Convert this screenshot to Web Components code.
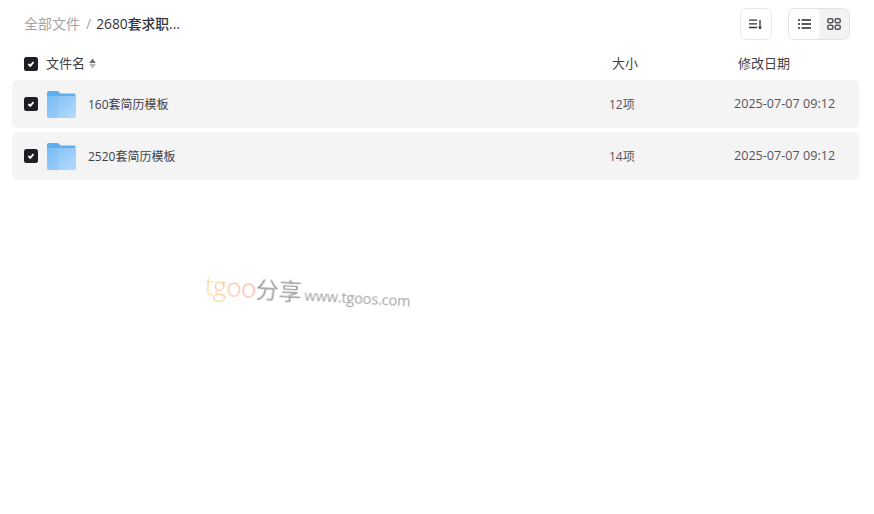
<!DOCTYPE html>
<html lang="zh">
<head>
<meta charset="utf-8">
<title>2680套求职...</title>
<style>
	html, body { margin: 0; background: #fff; }
	body {
		position: relative;
		height: 514px;
		overflow: hidden;
		font-family: "Open Sans", "Noto Sans CJK SC", sans-serif;
		color: #33333d;
	}
</style>
</head>
<body>
<file-list>
	<file-toolbar slot="top"></file-toolbar>
	<file-head slot="top"></file-head>
	<file-row name="160套简历模板" size="12项" date="2025-07-07 09:12"></file-row>
	<file-row name="2520套简历模板" size="14项" date="2025-07-07 09:12"></file-row>
</file-list>
<water-mark></water-mark>

<script>
const CHECK_STYLE = `
	.check {
		width: 14px;
		height: 14px;
		border-radius: 2.5px;
		background: #1d1d23;
		display: grid;
		place-items: center;
		flex: none;
	}
	.check svg { display: block; }
`;
const CHECK_HTML = `<span class="check"><svg width="10" height="10" viewBox="0 0 10 10"><path d="M2.4 5 4.3 6.9 7.5 3.2" fill="none" stroke="#fff" stroke-width="1.8"/></svg></span>`;

class FileList extends HTMLElement {
	constructor() {
		super();
		this.attachShadow({ mode: "open" });
		this.shadowRoot.innerHTML = `
			<style>
				:host { display: block; }
				.rows {
					display: grid;
					gap: 4px;
					padding: 0 15px 0 12px;
				}
			</style>
			<slot name="top"></slot>
			<div class="rows"><slot></slot></div>
		`;
	}
}
customElements.define("file-list", FileList);

class FileToolbar extends HTMLElement {
	constructor() {
		super();
		this.attachShadow({ mode: "open" });
		this.shadowRoot.innerHTML = `
			<style>
				:host {
					display: flex;
					align-items: center;
					height: 32px;
					padding: 8px 24px 0 24px;
				}
				.crumbs {
					display: flex;
					align-items: center;
					flex: 1;
					font-size: 14px;
					line-height: 32px;
				}
				.root { color: #a3a3a8; }
				.sep { color: #a3a3a8; margin: 0 5px 0 6px; font-size: 14px; }
				.current { color: #33333d; font-weight: 500; font-size: 13.8px; }
				.btn {
					box-sizing: border-box;
					width: 32px;
					height: 32px;
					border: 1px solid #e8e8ea;
					border-radius: 7px;
					display: grid;
					place-items: center;
					margin-right: 16px;
				}
				.toggle {
					box-sizing: border-box;
					width: 62px;
					height: 32px;
					border: 1px solid #e4e4e6;
					border-radius: 7px;
					background: #f3f3f4;
					display: flex;
					overflow: hidden;
				}
				.toggle span {
					flex: 1;
					display: grid;
					place-items: center;
				}
				.toggle .on {
					background: #fff;
					border-radius: 6px 0 0 6px;
				}
				svg { display: block; }
			</style>
			<div class="crumbs">
				<span class="root">全部文件</span><span class="sep">/</span><span class="current">2680套求职...</span>
			</div>
			<div class="btn">
				<svg width="14" height="12" viewBox="0 0 14 12" fill="none" stroke="#33333a" stroke-width="1.3">
					<path d="M0 2.1H8M0 5.8H8M0 9.5H8"/>
					<path d="M11 2V10.5"/>
					<path d="M9.6 8.6 11 10.5 12.4 8.6" stroke-width="1.1"/>
				</svg>
			</div>
			<div class="toggle">
				<span class="on">
					<svg width="13" height="10" viewBox="0 0 13 10" fill="none" stroke="#26262c" stroke-width="1.3">
						<path d="M0 1H2M0 5H2M0 9H2" />
						<path d="M3.5 1H13M3.5 5H13M3.5 9H13"/>
					</svg>
				</span>
				<span>
					<svg width="14" height="12" viewBox="0 0 14 12" fill="none" stroke="#55555c" stroke-width="1.5">
						<rect x="0.8" y="0.8" width="5" height="4" rx="1.3"/>
						<rect x="8.2" y="0.8" width="5" height="4" rx="1.3"/>
						<rect x="0.8" y="7.2" width="5" height="4" rx="1.3"/>
						<rect x="8.2" y="7.2" width="5" height="4" rx="1.3"/>
					</svg>
				</span>
			</div>
		`;
	}
}
customElements.define("file-toolbar", FileToolbar);

class FileHead extends HTMLElement {
	constructor() {
		super();
		this.attachShadow({ mode: "open" });
		this.shadowRoot.innerHTML = `
			<style>
				${CHECK_STYLE}
				:host {
					display: flex;
					align-items: center;
					box-sizing: border-box;
					height: 40px;
					padding: 6px 0 0 24px;
					font-size: 13px;
					line-height: 18px;
					color: #3f3f48;
				}
				.check { margin-top: 1px; }
				.name {
					display: flex;
					align-items: center;
					width: 588px;
				}
				.name b { font-weight: 400; margin-left: 8px; }
				.sort { margin-left: 4px; display: block; }
				.size { width: 126px; }
			</style>
			<div class="name">
				${CHECK_HTML}
				<b>文件名</b>
				<svg class="sort" width="7" height="11" viewBox="0 0 7 11">
					<path d="M3.5 0.5 6.8 5H0.2Z" fill="#6e6e73"/>
					<path d="M3.5 10.5 6.8 6H0.2Z" fill="#b5b5b8"/>
				</svg>
			</div>
			<div class="size">大小</div>
			<div>修改日期</div>
		`;
	}
}
customElements.define("file-head", FileHead);

class FileRow extends HTMLElement {
	constructor() {
		super();
		this.attachShadow({ mode: "open" });
		this.shadowRoot.innerHTML = `
			<style>
				${CHECK_STYLE}
				:host {
					display: flex;
					align-items: center;
					height: 48px;
					padding-left: 12px;
					background: #f4f4f4;
					border-radius: 5px;
					font-size: 12px;
					color: #3f3f48;
				}
				.folder { display: block; margin: 0 12px 0 9px; flex: none; }
				.name { width: 521px; margin-top: -1px; }
				.size { width: 125px; color: #55555c; margin-top: -1px; }
				.date { color: #55555c; font-size: 12.6px; margin-top: -1px; }
			</style>
			${CHECK_HTML}
			<svg class="folder" width="29" height="27" viewBox="0 0 29 27">
				<defs>
					<linearGradient id="g" x1="0" y1="0" x2="1" y2="1">
						<stop offset="0" stop-color="#7dbcf5"/>
						<stop offset="1" stop-color="#b5dcfd"/>
					</linearGradient>
				</defs>
				<path d="M1.5 0H10Q11.3 0 12.1 1L13.2 2.6H27Q28.5 2.6 28.5 4V9H0V1.5Q0 0 1.5 0Z" fill="#5eaef0"/>
				<path d="M0 5H27.8Q29 5 29 6.2V25.8Q29 27 27.8 27H1.5Q0 27 0 25.5Z" fill="url(#g)"/>
				<path d="M0 5H11V27H1.5Q0 27 0 25.5Z" fill="#7dbcf5" opacity="0.35"/>
			</svg>
			<span class="name"></span>
			<span class="size"></span>
			<span class="date"></span>
		`;
	}
	connectedCallback() {
		this.shadowRoot.querySelector(".name").textContent = this.getAttribute("name");
		this.shadowRoot.querySelector(".size").textContent = this.getAttribute("size");
		this.shadowRoot.querySelector(".date").textContent = this.getAttribute("date");
	}
}
customElements.define("file-row", FileRow);

class WaterMark extends HTMLElement {
	constructor() {
		super();
		this.attachShadow({ mode: "open" });
		this.shadowRoot.innerHTML = `
			<style>
				:host {
					position: absolute;
					left: 206px;
					top: 267px;
					white-space: nowrap;
					display: flex;
					align-items: baseline;
					transform: rotate(3.2deg);
					transform-origin: left top;
					font-family: "Open Sans", "Noto Sans CJK SC", sans-serif;
					font-weight: 300;
					filter: blur(0.3px);
				}
				.brand {
					font-size: 26px;
					letter-spacing: -0.4px;
					background: linear-gradient(90deg, #fad98c 0%, #fcc99a 40%, #fca89e 100%);
					-webkit-background-clip: text;
					background-clip: text;
					color: transparent;
				}
				.cn { font-size: 23px; color: #a2a2a2; margin-right: 3px; font-weight: 400; }
				.url { font-size: 14.6px; letter-spacing: -0.2px; color: #a2a2a2; font-weight: 400; }
			</style>
			<span class="brand">tgoo</span><span class="cn">分享</span><span class="url">www.tgoos.com</span>
		`;
	}
}
customElements.define("water-mark", WaterMark);
</script>
</body>
</html>
